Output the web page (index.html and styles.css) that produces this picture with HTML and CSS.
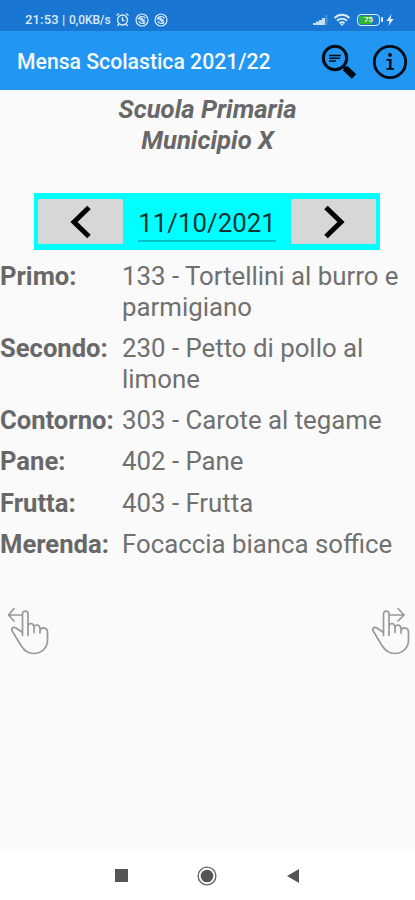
FILE: index.html
```html
<!DOCTYPE html>
<html lang="it">
<head>
<meta charset="utf-8">
<meta name="viewport" content="width=device-width">
<title>Mensa Scolastica 2021/22</title>
<link rel="stylesheet" href="styles.css">
</head>
<body>
<header class="status">
  <span class="clock">21:53 | </span><span class="speed">0,0KB/s</span>
  <svg class="alarm" width="15" height="15" viewBox="0 0 15 15"><circle cx="7.5" cy="8" r="5"/><path d="M1.5 3.5 4 1.5M13.5 3.5 11 1.5M7.5 5v3.5h2M4 12l-1.5 2M11 12l1.5 2"/></svg>
  <svg class="sync" width="14" height="14" viewBox="0 0 14 14"><circle cx="7" cy="7" r="6"/><path d="M3 6.500C4 3 9 2.500 10.500 5.500M4 5l6 5M4 8c1 3 4.500 3 6 1.500M6 5l4 3"/></svg>
  <svg class="sync" width="14" height="14" viewBox="0 0 14 14"><circle cx="7" cy="7" r="6"/><path d="M3 6.500C4 3 9 2.500 10.500 5.500M4 5l6 5M4 8c1 3 4.500 3 6 1.500M6 5l4 3"/></svg>
  <span class="spacer"></span>
  <svg class="signal" width="17" height="12" viewBox="0 0 17 12"><path d="M1 11V9h3V7.500h3V6h3V4h3v7z"/><path class="faint" d="M13.500 11V1h2v10z"/></svg>
  <svg class="wifi" width="18" height="14" viewBox="0 0 18 14"><path d="M1.500 5C6 .8 12 .8 16.500 5M4 7.800c3-2.700 7-2.700 10 0M6.500 10.300c1.500-1.200 3.500-1.200 5 0"/><path class="dot" d="m7.300 11 1.700 2 1.700-2z"/></svg>
  <span class="battery"><span class="charge"></span><span class="level">75</span></span>
  <svg class="bolt" width="8" height="12" viewBox="0 0 8 12"><path d="M5.500 0 .5 7h3l-1 5 5-7h-3z"/></svg>
</header>
<div class="toolbar">
  <h1>Mensa Scolastica 2021/22</h1>
  <svg class="search" width="36" height="36" viewBox="0 0 36 36"><circle cx="14" cy="14" r="11.700"/><path class="text" d="M8 11.500h12M8 14.200h11M8 17h7"/><path class="neck" d="m22 22 4 4"/><path class="handle" d="m24 24 9 8.500"/></svg>
  <svg class="info" width="36" height="36" viewBox="0 0 36 36"><circle cx="18" cy="18" r="15.700"/><circle class="dot" cx="18" cy="11" r="1.900"/><path d="M14.500 15h5v9h2.500v1.800h-7.500V24H17v-7.300h-2.500z"/></svg>
</div>
<main>
  <h2>Scuola Primaria<br>Municipio X</h2>
  <div class="picker">
    <button aria-label="Giorno precedente"><svg width="24" height="34" viewBox="0 0 24 34"><path d="M20 2.500 5 17l15 14.500"/></svg></button>
    <div class="date">11/10/2021</div>
    <button aria-label="Giorno successivo"><svg width="24" height="34" viewBox="0 0 24 34"><path d="m4 2.500 15 14.500L4 31.500"/></svg></button>
  </div>
  <dl class="menu">
    <dt>Primo:</dt><dd>133 - Tortellini al burro e<br>parmigiano</dd>
    <dt>Secondo:</dt><dd>230 - Petto di pollo al<br>limone</dd>
    <dt>Contorno:</dt><dd>303 - Carote al tegame</dd>
    <dt>Pane:</dt><dd>402 - Pane</dd>
    <dt>Frutta:</dt><dd>403 - Frutta</dd>
    <dt>Merenda:</dt><dd>Focaccia bianca soffice</dd>
  </dl>
  <div class="swipes">
    <svg width="44" height="50" viewBox="0 0 44 50"><path d="M16.500 30.500V9q0-2.800 2.800-2.800T22 9v21.500M22 22q0-3.500 2.800-3.500T28 22v5.500M28 23q0-3 2.800-3t3.200 3.500v4.500M34 26q.5-3.200 3.500-3.200 4 .2 4 4.200v8c0 8-6 13.500-14 13.500-6 0-10-4-12.500-8L6.500 26.500c-2-3.500.5-5.200 3.500-3.500l6.500 4.500M16.500 10H2.500M8 3.500 2.500 10 8 16"/></svg>
    <svg width="44" height="50" viewBox="0 0 44 50"><path d="M16.500 30.500V9q0-2.800 2.800-2.800T22 9v21.500M22 22q0-3.500 2.800-3.500T28 22v5.500M28 23q0-3 2.800-3t3.200 3.500v4.500M34 26q.5-3.200 3.500-3.200 4 .2 4 4.200v8c0 8-6 13.500-14 13.500-6 0-10-4-12.500-8L6.500 26.500c-2-3.500.5-5.200 3.500-3.500l6.500 4.500M22 10h14.500M31 3.500l6 6.500-6 6"/></svg>
  </div>
</main>
<nav>
  <span><i class="recent"></i></span>
  <svg width="22" height="22" viewBox="0 0 22 22"><circle class="ring" cx="11" cy="11" r="8.900"/><circle cx="11" cy="11" r="6.300"/></svg>
  <svg width="14" height="16" viewBox="0 0 14 16"><path d="M1 8 13 1v14z"/></svg>
</nav>
</body>
</html>
```
FILE: styles.css
```css
* { box-sizing: border-box; }
body { margin: 0; height: 900px; display: flex; flex-direction: column; overflow: hidden; background: #fafafa; color: #686868; font-family: Roboto, sans-serif; }
svg { display: block; flex: none; fill: none; }
.status { height: 31px; flex: none; display: flex; align-items: center; padding: 8px 21px 0 25px; background: #1976d2; color: #d9ebfc; }
.clock { font-size: 13px; font-weight: 500; white-space: pre; letter-spacing: .15px; }
.speed { font-size: 12px; font-weight: 500; width: 43px; letter-spacing: -.1px; white-space: nowrap; }
.alarm { margin-left: 3px; stroke: #d9ebfc; stroke-width: 1.300; }
.sync { margin-left: 5px; stroke: #d9ebfc; stroke-width: 1.200; }
.spacer { flex: 1; }
.signal { fill: #c4def8; }
.signal .faint { opacity: .3; }
.wifi { margin-left: 4px; stroke: #d9ebfc; stroke-width: 2; }
.wifi .dot { fill: #d9ebfc; stroke: none; }
.battery { position: relative; width: 23px; height: 12px; margin: 0 6px; padding: 1px; border: 1.500px solid #e1effc; border-radius: 4px; }
.battery::after { content: ""; position: absolute; right: -4px; top: 2.500px; width: 2px; height: 5px; background: #e1effc; border-radius: 1px; }
.charge { display: block; width: 13px; height: 100%; background: #2db52d; }
.level { position: absolute; inset: 0; font: bold 8px/9px Roboto, sans-serif; text-align: center; color: #e5f8e5; }
.bolt { fill: #e5f1fd; }
.toolbar { height: 59px; flex: none; display: flex; align-items: center; padding: 2px 7px 0 17px; background: #2196f3; }
h1 { flex: 1; margin: 0; font-size: 21.200px; font-weight: 500; color: #f5faff; white-space: nowrap; }
.search { stroke: #000b14; stroke-width: 3; }
.search .text { stroke-width: 1.600; }
.search .handle { stroke-width: 6.500; }
.info { margin-left: 15px; fill: #000b14; }
.info circle:first-child { fill: none; stroke: #000b14; stroke-width: 2.800; }
main { flex: 1; }
h2 { margin: 4px 0 0; text-align: center; font-size: 25.700px; line-height: 31px; font-style: italic; font-weight: 700; }
.picker { width: 346px; height: 57px; margin: 37px 0 0 34px; padding: 6px 4px; display: flex; justify-content: space-between; background: #0ff; }
.picker button { width: 85px; height: 45px; padding: 0; border: 0; border-radius: 2px; display: grid; place-items: center; background: #d6d7d7; }
.picker button svg { stroke: #000; stroke-width: 5; }
.date { width: 138px; height: 43px; padding-top: 7px; border-bottom: 2px solid #00c4c4; text-align: center; font-size: 25.800px; line-height: 34px; color: #0b3434; }
.menu { margin: 11px 0 0; display: grid; grid-template-columns: 122px 1fr; row-gap: 10.600px; font-size: 25.800px; line-height: 30.700px; white-space: nowrap; }
dt { font-weight: 700; font-size: 25.600px; }
dd { margin: 0; color: #707070; }
.swipes { display: flex; justify-content: space-between; margin-top: 45px; padding: 0 4px 0 6px; }
.swipes svg { stroke: #999; stroke-width: 1.700; stroke-linejoin: round; stroke-linecap: round; }
nav { height: 49px; flex: none; display: flex; align-items: center; justify-content: space-between; padding: 0 115px 0 115px; background: #fff; }
.recent { display: block; width: 13px; height: 13px; background: #555; }
nav svg { fill: #555; }
nav .ring { fill: none; stroke: #666; stroke-width: 1.400; }
```
